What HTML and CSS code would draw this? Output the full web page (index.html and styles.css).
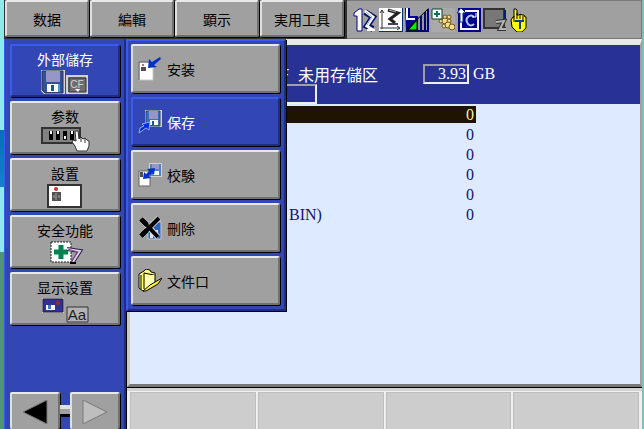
FILE: index.html
```
<!DOCTYPE html>
<html lang="zh">
<head>
  <meta charset="UTF-8" />
  <meta name="viewport" content="width=device-width, initial-scale=1.0"/>
  <title>外部儲存</title>
  <link rel="stylesheet" href="styles.css">
</head>
<body>
  <div class="screen">
    <header class="top-bar">
      <nav class="main-menu">
        <button class="key">数据</button>
        <button class="key">編輯</button>
        <button class="key">顕示</button>
        <button class="key">実用工具</button>
      </nav>
      <div class="status-icons">
        <!-- robot number -->
        <svg viewBox="0 0 24 24">
          <path d="M1 5l5-4h3v22H4V8H1z" fill="#fff" stroke="#00008c"/>
          <path d="M12 4l8 5-6 9 6 3" fill="none" stroke="#00106e" stroke-width="6"/>
          <path d="M12 3l8 6-6 9 6 4" fill="none" stroke="#fff" stroke-width="3"/>
          <path d="M13 4l6 5-5 8" fill="none" stroke="#a0aac8"/>
          <path d="M14 22h8" stroke="#fff" stroke-width="2"/>
        </svg>
        <!-- coordinate system -->
        <svg viewBox="0 0 24 24">
          <path d="M0 0h24v24H0z" fill="#00326e"/>
          <path d="M0 0h23v23H0z" fill="#fff"/>
          <path d="M3 2v19M1 5l2-3 2 3M1 20h20M18 18l3 2-3 2" fill="none" stroke="#333"/>
          <path d="M9 2l10 3-8 6 5 4" fill="none" stroke="#222" stroke-width="3"/>
          <path d="M10 2l7 2" stroke="#b4b4b4"/>
          <path d="M9 16h10" stroke="#444" stroke-width="2"/>
        </svg>
        <!-- speed -->
        <svg viewBox="0 0 24 24">
          <path d="M0 0h5v8h8v5L1 23z" fill="#000096"/>
          <path d="M2 0v11h8" fill="none" stroke="#fff" stroke-width="2"/>
          <path d="M24 0v24H0z" fill="#000078"/>
          <path d="M12 12v10H3z" fill="#00f000" stroke="#000"/>
          <path d="M13 11l2-2v13h-2zM17 7l2-2v17h-2zM21 3l1-1v20h-1z" fill="#96969b"/>
          <path d="M1 22L23 1" stroke="#000"/>
        </svg>
        <!-- tool group -->
        <svg viewBox="0 0 24 24">
          <path d="M0 0h24v24H0z" fill="#aaa"/>
          <g fill="#f5dc8c" stroke="#6e5a1e">
            <circle cx="14" cy="9" r="2"/><circle cx="18" cy="9" r="2"/>
            <circle cx="10" cy="13" r="2"/><circle cx="14" cy="13" r="3"/><circle cx="18" cy="13" r="2"/>
            <circle cx="13" cy="18" r="2"/><circle cx="17" cy="17" r="3"/><circle cx="21" cy="19" r="3"/>
          </g>
          <path d="M1 1h10v10H1z" fill="#fff" stroke="#003c28"/>
          <path d="M6 3v6M3 6h6" stroke="#007850" stroke-width="2"/>
        </svg>
        <!-- cycle -->
        <svg viewBox="0 0 24 24">
          <path d="M1 0h23v24H1z" fill="#00008c"/>
          <path d="M8 3h13v18H4V9" fill="none" stroke="#fff" stroke-width="2"/>
          <path d="M17 9q-3-3-6 0t0 7q3 3 6 0" fill="none" stroke="#b4c8f0" stroke-width="2"/>
          <path d="M19 5v4h-4" fill="none" stroke="#fff"/>
          <path d="M4 0L0 5h3v9h3V5h3z" fill="#fff" stroke="#00326e"/>
        </svg>
        <!-- servo -->
        <svg viewBox="0 0 24 24">
          <path d="M1 1h20v19H1z" fill="#787878" stroke="#333" stroke-width="2"/>
          <path d="M21 2h2v11h-2z" fill="#001e78"/>
          <path d="M13 14l8-1-4 8h6" fill="none" stroke="#333" stroke-width="4"/>
          <path d="M13 14l8-1-4 8h6" fill="none" stroke="#b4b4b4" stroke-width="2"/>
        </svg>
        <!-- teach mode -->
        <svg viewBox="0 0 24 24">
          <path d="M5 1h2l1 1v5h2l1-1 2 1h2l1 2h1v11l-4 4H8l-5-5-1-7 2-3h1z" fill="#ff0" stroke="#000"/>
          <path d="M8 5v6M11 6v5M14 8v4M5 8v6" stroke="#000"/>
          <path d="M6 13h9M11 13v8" stroke="#0a3c8c" stroke-width="2"/>
        </svg>
      </div>
    </header>

    <div class="work">
      <aside class="side-menu">
        <button class="key side-key active">
          外部儲存
          <svg viewBox="0 0 52 26">
            <path d="M2 1h24v24H5l-3-3z" fill="#d2d2d2"/>
            <path d="M3 2h21v22H6l-3-3z" fill="#32509b" stroke="#28324b"/>
            <path d="M7 2h14v11H7z" fill="#9696c8"/>
            <path d="M8 15h11v8H8z" fill="#fff"/>
            <path d="M12 16h3v6h-3z" fill="#1e50aa"/>
            <path d="M19 15h2v8h-2z" fill="#5096dc"/>
            <path d="M28 7h20v17H28z" fill="#828282" stroke="#d2d2d2" stroke-width="2"/>
            <path d="M30 9h17v14H30z" fill="#6e6e6e" stroke="#323232"/>
            <text x="38" y="19" class="icon-text cf">CF</text>
            <path d="M36 20h5l-2 3z" fill="#fff"/>
          </svg>
        </button>
        <button class="key side-key">
          参数
          <svg viewBox="0 0 52 26">
            <path d="M3 2h38v15H3z" fill="#828282" stroke="#323232" stroke-width="2"/>
            <path d="M10 5h4v9h-4zM17 5h4v9h-4zM24 5h4v9h-4zM31 5h4v9h-4z"/>
            <path d="M11 5h2v3h-2zM18 5h2v3h-2zM25 10h2v3h-2zM32 5h2v3h-2z" fill="#fff"/>
            <path d="M36 5h3l1 8 2-2 2 2 2-1 2 2 2 1v5l-2 5H38l-2-5-3-4 1-2 3 1z" fill="#fff" stroke="#323232"/>
            <path d="M42 12v4M46 13v4" stroke="#323232"/>
          </svg>
        </button>
        <button class="key side-key">
          設置
          <svg viewBox="0 0 52 26">
            <path d="M9 2h33v22H9z" fill="#fff" stroke="#323232" stroke-width="2"/>
            <circle cx="17" cy="6" r="2" fill="#c83232"/>
            <path d="M13 9h9v9h-9z" fill="#505050"/>
            <path d="M17 10v7M15 12v3M20 12v3" stroke="#aaa"/>
          </svg>
        </button>
        <button class="key side-key">
          安全功能
          <svg viewBox="0 0 52 26">
            <path d="M12 2h20v20H12z" fill="#fff" stroke="#1e1e1e" stroke-dasharray="2 1"/>
            <path d="M22 5v14M15 12h14" stroke="#008250" stroke-width="5"/>
            <path d="M28 9l13 2-7 11" fill="none" stroke="#281e46" stroke-width="4"/>
            <path d="M28 9l13 2-7 11" fill="none" stroke="#e1d2e6" stroke-width="2"/>
            <path d="M29 9l10 3-6 8" fill="none" stroke="#8c50a0"/>
            <path d="M31 23h6" stroke="#000" stroke-width="2"/>
          </svg>
        </button>
        <button class="key side-key">
          显示设置
          <svg viewBox="0 0 52 26">
            <path d="M3 1h22v15H3z" fill="#d2d2d2"/>
            <path d="M4 2h20v13H4z" fill="#323296" stroke="#1e1e3c"/>
            <path d="M7 8h9v5H7z" fill="#fff"/>
            <path d="M9 8h3v4H9z" fill="#3c78d2"/>
            <circle cx="19" cy="6" r="2" fill="#a02828"/>
            <path d="M28 10h21v15H28z" fill="#b4b4b4" stroke="#323232"/>
            <text x="38" y="23" class="icon-text aa">Aa</text>
          </svg>
        </button>
        <div class="pager">
          <button class="key" aria-label="Previous">
            <svg viewBox="0 0 26 26"><path d="M25 1v24L1 13z" fill="#000" stroke="#787878"/></svg>
          </button>
          <span class="link"></span>
          <button class="key" aria-label="Next" disabled>
            <svg viewBox="0 0 26 26"><path d="M1 1v24l24-12z" fill="#bebebe" stroke="#787878"/></svg>
          </button>
        </div>
      </aside>

      <main class="main">
        <section class="panel">
          <div class="info">
            <div class="info-row">
              <span class="device">F</span>
              <label for="free">未用存儲区</label>
              <input type="text" id="free" value="3.93" readonly>
              <span class="unit">GB</span>
            </div>
            <div class="info-row">
              <input type="text" class="folder" aria-label="Folder" readonly>
            </div>
          </div>
          <table class="files">
            <tr class="selected"><td></td><td>0</td></tr>
            <tr><td></td><td>0</td></tr>
            <tr><td></td><td>0</td></tr>
            <tr><td></td><td>0</td></tr>
            <tr><td></td><td>0</td></tr>
            <tr><td>BIN)</td><td>0</td></tr>
          </table>
        </section>
        <footer class="soft-keys">
          <div></div>
          <div></div>
          <div></div>
          <div></div>
        </footer>
      </main>

      <div class="popup">
        <button class="key item">
          <svg viewBox="0 0 24 24">
            <path d="M1 5h14v18H1z" fill="#fff" stroke="#c8c8c8"/>
            <path d="M1 23V5h12" fill="none" stroke="#505050"/>
            <circle cx="5" cy="8" r="1" fill="#c83232"/>
            <path d="M3 10h5v4H3z" fill="#505050"/>
            <path d="M22 0l-8 5-3-3-1 9 9-1-3-2 7-6z" fill="#0032c8"/>
          </svg>
          安装
        </button>
        <button class="key item active">
          <svg viewBox="0 0 24 24">
            <path d="M7 0h17v17H9l-2-2z" fill="#d2d2d2"/>
            <path d="M8 1h14v15H10l-2-2z" fill="#3c6ebe" stroke="#28466e"/>
            <path d="M11 1h9v8h-9z" fill="#9696c8"/>
            <path d="M12 10h8v5h-8z" fill="#fff"/>
            <path d="M14 11h2v4h-2z" fill="#1e50aa"/>
            <path d="M1 23l1-5 4-2-2-2 8-2-1 8-3-2z" fill="#0032c8" stroke="#8caaff"/>
          </svg>
          保存
        </button>
        <button class="key item">
          <svg viewBox="0 0 24 24">
            <path d="M11 0h13v14H11z" fill="#d2d2d2"/>
            <path d="M12 1h11v12H12z" fill="#5082c8"/>
            <path d="M14 1h7v5h-7z" fill="#9696c8"/>
            <path d="M15 8h6v4h-6z" fill="#fff"/>
            <path d="M1 8h11v15H1z" fill="#fff" stroke="#646464"/>
            <path d="M2 9h3v5H2z" fill="#505050"/>
            <path d="M17 5l-8 1 2 2-3 3-2-2-1 7 8-1-2-2 3-3 2 2z" fill="#0032c8"/>
          </svg>
          校験
        </button>
        <button class="key item">
          <svg viewBox="0 0 24 24">
            <path d="M10 6h13v17H10z" fill="#2864be" stroke="#c8c8c8"/>
            <path d="M12 14h8v8h-8z" fill="#dceaff"/>
            <path d="M15 15h2v7h-2z" fill="#1e50aa"/>
            <path d="M3 3l17 18M21 2L3 20" stroke="#d2d2d2" stroke-width="6"/>
            <path d="M3 3l17 18M21 2L3 20" stroke="#000" stroke-width="4"/>
            <path d="M3 3l6 6M9 14l-6 6" stroke="#000" stroke-width="5"/>
          </svg>
          刪除
        </button>
        <button class="key item">
          <svg viewBox="0 0 24 24">
            <path d="M1 5l5-3 2-2 4 1 1 2 4 1v12L5 22l-4-3z" fill="#ffff78" stroke="#000"/>
            <path d="M3 6v14M6 4v16M6 4l10 2" fill="none" stroke="#000"/>
            <path d="M7 6h9v10l-9 5z" fill="#ffffb4"/>
            <path d="M5 22l7-6 12-7-4 6-12 7z" fill="#fff03c" stroke="#000"/>
          </svg>
          文件口
        </button>
      </div>
    </div>
  </div>
</body>
</html>
```

FILE: styles.css
```
* { box-sizing: border-box; }
body {
  margin: 0;
  overflow: hidden;
  font-family: "Noto Sans CJK JP", "Noto Sans CJK SC", sans-serif;
  font-size: 14px;
  color: #000;
  background:
    linear-gradient(#8ceaea 130px, #0a6eb4 130px, #1482c8 187px, #8ceaea 187px, #8ceaea 252px, #50966e 252px) left / 4px 100% no-repeat,
    #82bebe;
}
.screen {
  display: flex;
  flex-direction: column;
  height: 100vh;
  margin: 0 2px 0 4px;
}
button, input {
  font: inherit;
  color: inherit;
  border-radius: 0;
}
svg { display: block; flex: none; }

/* raised key */
.key {
  display: flex;
  align-items: center;
  justify-content: center;
  padding: 0;
  line-height: 16px;
  background: #a0a0a0;
  border: 2px solid;
  border-color: #e8e8e8 #707070 #707070 #e0e0e0;
  border-radius: 2px;
  box-shadow: 1px 1px 0 #000;
  cursor: pointer;
}
.active {
  color: #fff;
  background: #3246b4;
  border-color: #3c5aeb #1e2d82 #1e2d82 #3c5aeb;
}

.top-bar {
  display: flex;
  flex: none;
  height: 39px;
  background: #000;
}
.main-menu {
  display: flex;
  gap: 1px;
  padding: 0 3px 2px 1px;
  background: #323232;
}
.main-menu .key { width: 84px; }
.status-icons {
  display: flex;
  flex: 1;
  align-items: center;
  gap: 2px;
  padding-left: 6px;
  background: #a0a0a0;
  border: solid #787878;
  border-width: 1px 1px 1px 0;
}
.status-icons svg { width: 24px; height: 24px; }

.work {
  position: relative;
  display: flex;
  flex: 1;
  min-height: 0;
}
.side-menu {
  display: flex;
  flex-direction: column;
  gap: 4px;
  width: 122px;
  padding: 5px 6px 0 5px;
  background: #3246b4;
  border: solid #3c5aeb;
  border-width: 0 0 0 1px;
  box-shadow: inset -2px 0 0 #1e2d82;
}
.side-key {
  flex-direction: column;
  justify-content: flex-start;
  height: 53px;
  padding-top: 5px;
}
.side-key svg {
  width: 52px;
  height: 26px;
  margin-top: 2px;
}
.icon-text {
  font-family: "Liberation Sans", sans-serif;
  text-anchor: middle;
}
.cf { font-size: 10px; fill: #d2d2d2; }
.aa { font-size: 15px; fill: #1e1e1e; }
.pager {
  display: flex;
  align-items: center;
  height: 37px;
  margin-top: auto;
}
.pager .key { width: 50px; height: 37px; border-bottom: 0; }
.pager svg { width: 26px; height: 26px; }
.link {
  flex: 1;
  height: 12px;
  background: linear-gradient(#e0e0e0 4px, #a0a0a0 4px, #a0a0a0 9px, #000 9px);
}

.main {
  display: flex;
  flex: 1;
  flex-direction: column;
  min-width: 0;
  border-left: 1px solid #000;
}
.panel {
  flex: 1;
  min-height: 0;
  background: #deeaff;
  border: 3px solid;
  border-color: #e8e8e8 #a0a0a0 #787878 #c8c8c8;
  border-top-width: 6px;
  border-right-width: 2px;
}
.info {
  padding-top: 19px;
  color: #fff;
  background: #283296;
}
.info-row {
  display: flex;
  align-items: center;
  height: 20px;
  font-size: 16px;
}
.device {
  width: 168px;
  padding-right: 9px;
  text-align: right;
}
.info input {
  width: 46px;
  height: 20px;
  padding: 0 1px;
  text-align: right;
  background: transparent;
  border: 2px solid;
  border-color: #a0a0a0 #f0f0f0 #f0f0f0 #a0a0a0;
}
.info input.folder { width: 187px; }
.info-row label { width: 125px; line-height: 20px; }
.info input, .unit, .files {
  font-family: "Liberation Serif", serif;
  font-size: 16px;
}
.unit { margin-left: 4px; }

.files {
  width: 346px;
  margin-top: 2px;
  color: #14146e;
  border-collapse: separate;
  border-spacing: 0;
}
.files td {
  height: 20px;
  padding: 0 2px 0 159px;
  line-height: 17px;
  border-bottom: 3px solid transparent;
  background-clip: padding-box;
}
.files td:last-child { padding-left: 0; text-align: right; }
.selected { color: #fff0a0; }
.selected td { background-color: #1e1400; }

.soft-keys {
  display: flex;
  gap: 2px;
  height: 42px;
  padding: 1px 3px 0 3px;
  background: #f0f0f0;
  border-top: 1px solid #000;
  box-shadow: inset 0 3px 0 #d2d2d2;
}
.soft-keys div {
  flex: 1;
  margin-top: 3px;
  background: #cdcdcd;
  border: solid #bebebe;
  border-width: 1px 1px 0 1px;
}

/* menu opened over the panel */
.popup {
  position: absolute;
  top: 0;
  left: 122px;
  display: flex;
  flex-direction: column;
  gap: 4px;
  width: 160px;
  padding: 3px 4px 4px 3px;
  background: #3246b4;
  border: 2px solid;
  border-color: #3c5aeb #1e2d82 #1e2d82 #3c5aeb;
  box-shadow: 1px 1px 0 #000;
}
.item {
  justify-content: flex-start;
  gap: 5px;
  height: 49px;
  padding-left: 5px;
}
.item svg { width: 24px; height: 24px; }
```
